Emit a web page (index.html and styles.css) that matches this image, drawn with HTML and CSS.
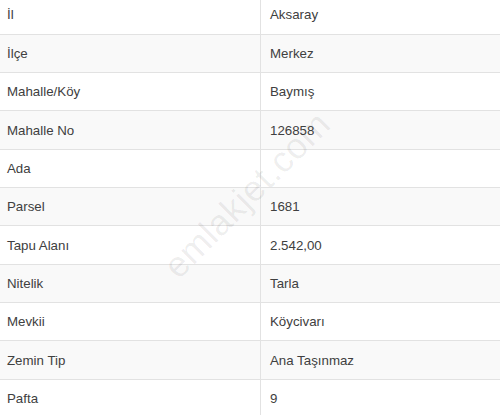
FILE: index.html
```html
<!DOCTYPE html>
<html lang="tr">
<head>
<meta charset="utf-8">
<link rel="stylesheet" href="styles.css">
</head>
<body>
<div class="wrap">
  <table class="info">
    <tbody>
      <tr><td class="k">İl</td><td class="v">Aksaray</td></tr>
      <tr><td class="k">İlçe</td><td class="v">Merkez</td></tr>
      <tr><td class="k">Mahalle/Köy</td><td class="v">Baymış</td></tr>
      <tr><td class="k">Mahalle No</td><td class="v">126858</td></tr>
      <tr><td class="k">Ada</td><td class="v"></td></tr>
      <tr><td class="k">Parsel</td><td class="v">1681</td></tr>
      <tr><td class="k">Tapu Alanı</td><td class="v">2.542,00</td></tr>
      <tr><td class="k">Nitelik</td><td class="v">Tarla</td></tr>
      <tr><td class="k">Mevkii</td><td class="v">Köycivarı</td></tr>
      <tr><td class="k">Zemin Tip</td><td class="v">Ana Taşınmaz</td></tr>
      <tr><td class="k">Pafta</td><td class="v">9</td></tr>
    </tbody>
  </table>
  <div class="watermark">emlakjet.com</div>
</div>
</body>
</html>
```
FILE: styles.css
```css
html, body {
  margin: 0;
  padding: 0;
  background: #fff;
}
body {
  font-family: "Liberation Sans", Arial, sans-serif;
  font-size: 13.3px;
  color: #404040;
  overflow: hidden;
}
.wrap {
  position: relative;
  margin-top: -4px;
}
.info {
  width: 500px;
  border-collapse: collapse;
  table-layout: fixed;
}
.info tr {
  height: 38.33px;
}
.info tr:nth-child(even) {
  background: #f9f9f9;
}
.info td {
  border-top: 1px solid #e2e2e2;
  padding: 0;
  vertical-align: middle;
}
.info tr:first-child td {
  border-top: none;
}
.k {
  width: 253px;
  padding-left: 7px !important;
  border-right: 1px solid #e2e2e2;
}
.v {
  padding-left: 9px !important;
}
.watermark {
  position: absolute;
  left: 138px;
  top: 178px;
  font-size: 36px;
  color: rgba(0, 0, 0, 0.07);
  transform: rotate(-45deg);
  transform-origin: center;
  pointer-events: none;
  letter-spacing: 0.5px;
}
```
